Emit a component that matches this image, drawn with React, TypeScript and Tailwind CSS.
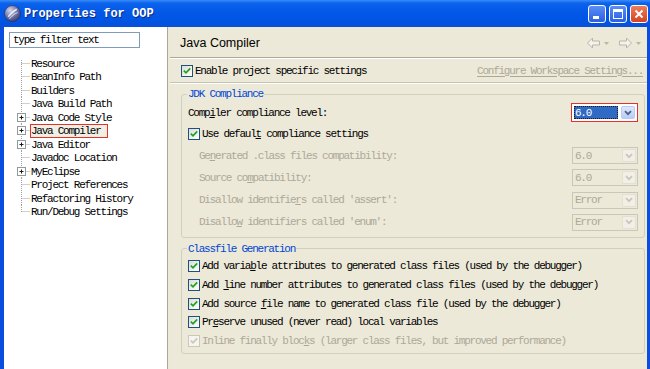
import React from "react";

const MONO = "font-['Liberation_Mono',monospace] text-[11px] tracking-[-1.25px] leading-[12px]";

function Check({ disabled }: { disabled?: boolean }) {
  return (
    <span
      className={
        disabled
          ? "flex h-[12px] w-[12px] shrink-0 items-center justify-center border border-[#cac8bb] bg-[#f5f4ef]"
          : "flex h-[12px] w-[12px] shrink-0 items-center justify-center border border-[#1c5180] bg-[linear-gradient(135deg,#dcdcd4,#ffffff)]"
      }
    >
      <svg width="8" height="8" viewBox="0 0 8 8">
        <path
          d="M0.8 3.6 L3 5.8 L7.2 1.4"
          stroke={disabled ? "#cac8bb" : "#21a121"}
          strokeWidth="1.7"
          fill="none"
        />
      </svg>
    </span>
  );
}

function Chevron({ color }: { color: string }) {
  return (
    <svg width="8" height="6" viewBox="0 0 8 6">
      <path d="M1 1.2 L4 4.2 L7 1.2" stroke={color} strokeWidth="1.8" fill="none" />
    </svg>
  );
}

function DisabledCombo({ value }: { value: string }) {
  return (
    <div className="flex h-[17px] w-[66px] items-center border border-[#c9c7ba] bg-[#ece9d8] pl-[2px] pr-[1px]">
      <span className={`${MONO} flex-1 text-[#aca899]`}>{value}</span>
      <span className="flex h-[13px] w-[14px] items-center justify-center border border-[#e2dfd3] bg-[#f1efe6]">
        <Chevron color="#c9c7ba" />
      </span>
    </div>
  );
}

function PlusBox() {
  return (
    <g>
      <rect x="13.5" y="2.5" width="8" height="8" fill="#fff" stroke="#919b9c" />
      <path d="M15.5 6.5 H19.5 M17.5 4.5 V8.5" stroke="#1b1b1b" strokeWidth="1" />
    </g>
  );
}

type TreeItem = { label: string; plus?: boolean; selected?: boolean };

const tree: TreeItem[] = [
  { label: "Resource" },
  { label: "BeanInfo Path" },
  { label: "Builders" },
  { label: "Java Build Path" },
  { label: "Java Code Style", plus: true },
  { label: "Java Compiler", plus: true, selected: true },
  { label: "Java Editor", plus: true },
  { label: "Javadoc Location" },
  { label: "MyEclipse", plus: true },
  { label: "Project References" },
  { label: "Refactoring History" },
  { label: "Run/Debug Settings" },
];

function TreeRow({ item, last, first }: { item: TreeItem; last: boolean; first: boolean }) {
  return (
    <div className="flex h-[13.5px] items-center">
      <svg width="27" height="14" viewBox="0 0 27 14" className="shrink-0">
        <path
          d={`M17.5 ${first ? 3 : 0} V${last ? 7 : 14}`}
          stroke="#a0a0a0"
          strokeDasharray="1 1"
        />
        <path d="M17.5 6.5 H26" stroke="#a0a0a0" strokeDasharray="1 1" />
        {item.plus && <PlusBox />}
      </svg>
      <span
        className={
          item.selected
            ? `${MONO} -ml-[1px] border border-[#e5302b] bg-[#f1efe4] pr-[6px] text-black`
            : `${MONO} text-black`
        }
      >
        {item.label}
      </span>
    </div>
  );
}

function NavArrow({ dir }: { dir: "left" | "right" }) {
  const d =
    dir === "left"
      ? "M1 6 L6 1 L6 4 L13 4 L13 8 L6 8 L6 11 Z"
      : "M13 6 L8 1 L8 4 L1 4 L1 8 L8 8 L8 11 Z";
  return (
    <div className="flex items-center gap-[3px]">
      <svg width="15" height="12" viewBox="0 0 14 12">
        <path d={d} fill="#f3f2ec" stroke="#b8b6aa" strokeWidth="1" strokeLinejoin="round" />
      </svg>
      <svg width="5" height="3" viewBox="0 0 5 3">
        <path d="M0 0 H5 L2.5 3 Z" fill="#b8b6aa" />
      </svg>
    </div>
  );
}

function CheckRow({ disabled, children }: { disabled?: boolean; children: React.ReactNode }) {
  return (
    <div className="flex h-[13px] items-center gap-[2px]">
      <Check disabled={disabled} />
      <span className={`${MONO} whitespace-nowrap ${disabled ? "text-[#aca899]" : "text-black"}`}>
        {children}
      </span>
    </div>
  );
}

function DisabledRow({ children, value }: { children: React.ReactNode; value: string }) {
  return (
    <div className="flex h-[17px] items-center justify-between">
      <span className={`${MONO} pl-[11px] text-[#aca899]`}>{children}</span>
      <DisabledCombo value={value} />
    </div>
  );
}

const U = ({ c }: { c: string }) => <span className="underline underline-offset-[1px]">{c}</span>;

export default function App() {
  return (
    <div className="flex h-[369px] w-[650px] flex-col overflow-hidden bg-[#0a4ee0]">
      {/* Title bar */}
      <div className="flex h-[27px] shrink-0 items-center justify-between bg-[linear-gradient(180deg,#3a8cf8_0%,#0b62ec_12%,#0358e8_45%,#0054e3_80%,#0a4fd6_100%)] pl-[4px] pr-[2px]">
        <div className="flex items-center gap-[3px]">
          <svg width="17" height="17" viewBox="0 0 16 16">
            <defs>
              <radialGradient id="ic" cx="0.35" cy="0.3" r="0.8">
                <stop offset="0" stopColor="#d4d8ee" />
                <stop offset="0.55" stopColor="#6c73a8" />
                <stop offset="1" stopColor="#34386a" />
              </radialGradient>
            </defs>
            <circle cx="8" cy="8" r="7.5" fill="url(#ic)" stroke="#2a2d5a" strokeWidth="0.6" />
            <path d="M4 11 C6 9 8 6 12 4" stroke="#fff" strokeWidth="1.4" fill="none" opacity="0.85" />
            <path d="M5 13 C8 10 9 8 13 7" stroke="#fff" strokeWidth="1" fill="none" opacity="0.6" />
          </svg>
          <span className="font-['Liberation_Mono',monospace] text-[12px] font-bold tracking-[0px] text-white [text-shadow:1px_1px_0_#0a2a8a]">
            Properties for OOP
          </span>
        </div>
        <div className="flex items-center gap-[3px]">
          <div className="flex h-[18px] w-[18px] items-end justify-start rounded-[3px] border border-white bg-[linear-gradient(180deg,#5b8ef5,#2a5fe0)] pb-[3px] pl-[4px]">
            <span className="h-[3px] w-[6px] bg-white" />
          </div>
          <div className="flex h-[18px] w-[18px] items-center justify-center rounded-[3px] border border-white bg-[linear-gradient(180deg,#5b8ef5,#2a5fe0)]">
            <span className="h-[10px] w-[10px] border-[1.5px] border-t-[3px] border-white" />
          </div>
          <div className="flex h-[18px] w-[18px] items-center justify-center rounded-[3px] border border-white bg-[linear-gradient(180deg,#ec7d5c,#d8431f)]">
            <svg width="10" height="10" viewBox="0 0 10 10">
              <path d="M1.5 1.5 L8.5 8.5 M8.5 1.5 L1.5 8.5" stroke="#fff" strokeWidth="2" />
            </svg>
          </div>
        </div>
      </div>

      {/* Body */}
      <div className="flex min-h-0 flex-1 pl-[4px] pr-[3px]">
        {/* Left panel */}
        <div className="flex w-[163px] shrink-0 flex-col bg-white">
          <div className="ml-[5px] mt-[5px] flex h-[16px] w-[131px] items-center border border-[#7f9db9] pl-[3px]">
            <span className={`${MONO} text-black`}>type filter text</span>
          </div>
          <div className="mt-[9px] flex flex-col">
            {tree.map((t, i) => (
              <TreeRow key={t.label} item={t} first={i === 0} last={i === tree.length - 1} />
            ))}
          </div>
        </div>
        <div className="w-[3px] shrink-0 border-l border-[#aca899] bg-[#ece9d8]" />

        {/* Right panel */}
        <div className="flex min-w-0 flex-1 flex-col bg-[#ece9d8]">
          <div className="flex h-[30px] shrink-0 items-center justify-between pl-[10px] pr-[6px] pt-[2px]">
            <span className="font-['Liberation_Sans',Arial,sans-serif] text-[12.5px] text-black">Java Compiler</span>
            <div className="flex items-center gap-[9px]">
              <NavArrow dir="left" />
              <NavArrow dir="right" />
            </div>
          </div>
          <div className="h-[2px] shrink-0 border-t border-[#aca899] bg-white" />

          <div className="flex h-[23px] shrink-0 items-center justify-between pl-[11px] pr-[4px]">
            <div className="flex items-center gap-[2px]">
              <Check />
              <span className={`${MONO} text-black`}>
                Enable pro<U c="j" />ect specific settings
              </span>
            </div>
            <span className={`${MONO} text-[#aca899] underline underline-offset-[2px]`}>
              Configure Workspace Settings...
            </span>
          </div>
          <div className="h-[2px] shrink-0 border-t border-[#c5c2b2] bg-white" />

          <div className="flex flex-col pl-[11px] pr-[2px]">
            {/* JDK Compliance */}
            <fieldset className="mt-[4px] rounded-[3px] border border-[#d0d0bf] pb-[6px] pl-[6px] pr-[6px]">
              <legend className={`${MONO} -ml-[1px] px-[1px] text-[#0046d5]`}>JDK Compliance</legend>
              <div className="mt-[3px] flex h-[19px] items-center justify-between">
                <span className={`${MONO} text-black`}>
                  Comp<U c="i" />ler compliance level:
                </span>
                <div className="flex h-[19px] w-[67px] items-center border border-[#e5302b] bg-white p-[1px]">
                  <div className="flex h-full flex-1 items-center p-[1px]">
                    <span className={`${MONO} flex h-full flex-1 items-center bg-[#316ac5] pl-[1px] text-white outline-1 outline-dotted outline-offset-[-1px] outline-[#1b1b1b]`}>
                      6.0
                    </span>
                    <span className="ml-[3px] flex h-full w-[14px] items-center justify-center rounded-[2px] border border-[#b8cbf3] bg-[linear-gradient(180deg,#dfe8fd,#b8ccf6)]">
                      <Chevron color="#4d6185" />
                    </span>
                  </div>
                </div>
              </div>
              <div className="mt-[5px]">
                <CheckRow>
                  Use defaul<U c="t" /> compliance settings
                </CheckRow>
              </div>
              <div className="mt-[7px] flex flex-col gap-[5.3px]">
                <DisabledRow value="6.0">
                  Ge<U c="n" />erated .class files compatibility:
                </DisabledRow>
                <DisabledRow value="6.0">
                  Source co<U c="m" />patibility:
                </DisabledRow>
                <DisabledRow value="Error">
                  Disallow identifie<U c="r" />s called 'assert':
                </DisabledRow>
                <DisabledRow value="Error">
                  Disallo<U c="w" /> identifiers called 'enum':
                </DisabledRow>
              </div>
            </fieldset>

            {/* Classfile Generation */}
            <fieldset className="mt-[5px] rounded-[3px] border border-[#d0d0bf] pb-[6px] pl-[6px] pr-[6px]">
              <legend className={`${MONO} -ml-[1px] px-[1px] text-[#0046d5]`}>Classfile Generation</legend>
              <div className="mt-[5px] flex flex-col gap-[5.6px]">
                <CheckRow>
                  Add varia<U c="b" />le attributes to generated class files (used by the debugger)
                </CheckRow>
                <CheckRow>
                  Add <U c="l" />ine number attributes to generated class files (used by the debugger)
                </CheckRow>
                <CheckRow>
                  Add source <U c="f" />ile name to generated class file (used by the debugger)
                </CheckRow>
                <CheckRow>
                  Pr<U c="e" />serve unused (never read) local variables
                </CheckRow>
                <CheckRow disabled>
                  Inline finally bloc<U c="k" />s (larger class files, but improved performance)
                </CheckRow>
              </div>
            </fieldset>
          </div>
        </div>
      </div>
    </div>
  );
}
